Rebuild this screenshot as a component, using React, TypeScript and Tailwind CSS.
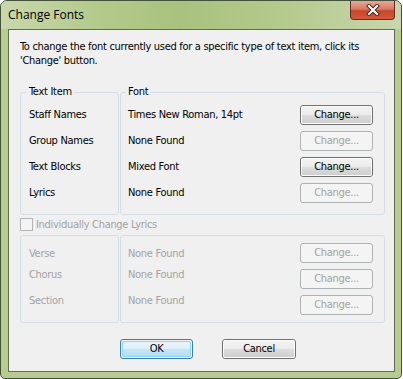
import { ReactNode } from 'react';

const font = "font-['DejaVu_Sans_Condensed','Liberation_Sans',sans-serif] tracking-[-0.3px]";

function WinButton({ children, disabled, primary, className = '' }: { children: ReactNode; disabled?: boolean; primary?: boolean; className?: string }) {
  if (disabled) {
    return (
      <div className={`h-[20px] rounded-[3px] border border-[#adb2b5] bg-[#f4f4f4] flex items-center justify-center text-[#a3a3a3] ${className}`}>
        {children}
      </div>
    );
  }
  if (primary) {
    return (
      <div className={`h-[20px] rounded-[3px] border border-[#3c7fb1] p-px ${className}`}>
        <div className="h-full rounded-[2px] border border-[#8fd6f7] bg-[linear-gradient(#e8f5fc_0%,#dcf0fa_50%,#c5e6f6_50%,#b8def2_100%)] flex items-center justify-center text-black">
          {children}
        </div>
      </div>
    );
  }
  return (
    <div className={`h-[20px] rounded-[3px] border border-[#707070] ${className}`}>
      <div className="h-full rounded-[2px] border border-[#fcfcfc] bg-[linear-gradient(#f2f2f2_0%,#ebebeb_50%,#dddddd_50%,#cfcfcf_100%)] flex items-center justify-center text-black">
        {children}
      </div>
    </div>
  );
}

export default function App() {
  const rows = [
    { item: 'Staff Names', font: 'Times New Roman, 14pt', enabled: true },
    { item: 'Group Names', font: 'None Found', enabled: false },
    { item: 'Text Blocks', font: 'Mixed Font', enabled: true },
    { item: 'Lyrics', font: 'None Found', enabled: false },
  ];
  const lyricRows = [
    { item: 'Verse', mt: 'mt-[11px]' },
    { item: 'Chorus', mt: 'mt-[7px]' },
    { item: 'Section', mt: 'mt-[12px]' },
  ];

  return (
    <div className="w-[403px] h-[379px] bg-white">
      <div className="w-[402px] h-[379px] rounded-t-[7px] rounded-b-[5px] border border-[#45523b] bg-[#b8cc92] flex flex-col">
        {/* title bar */}
        <div className="h-[28px] shrink-0 flex items-start justify-between rounded-t-[6px] bg-[linear-gradient(90deg,#c9d8ad_0%,#b3c98a_25%,#a9c27e_45%,#b4c98c_70%,#c8d6ad_100%)]">
          <span className="ml-[7px] mt-[6px] text-[12px] leading-[16px] text-black font-['Open_Sans',sans-serif]">Change Fonts</span>
          <div className="mr-[6px] w-[45px] h-[19px] rounded-b-[4px] border border-t-0 border-[#6b2b1f] bg-[linear-gradient(#e8a797_0%,#d77a63_45%,#c8442a_55%,#d45a3e_100%)] flex items-center justify-center">
            <svg width="14" height="12" viewBox="0 0 14 12">
              <path d="M3 2 L11 10 M11 2 L3 10" stroke="#4a1d14" strokeWidth="4" strokeLinecap="square" />
              <path d="M3 2 L11 10 M11 2 L3 10" stroke="#ffffff" strokeWidth="2.2" strokeLinecap="square" />
            </svg>
          </div>
        </div>

        {/* client area */}
        <div className={`ml-[7px] w-[387px] h-[343px] border border-[#5f6f52] bg-[#f0f0f0] text-[11px] leading-[14px] text-black ${font}`}>
          <p className="ml-[11px] mt-[10px]">
            To change the font currently used for a specific type of text item, click its
            <br />
            'Change' button.
          </p>

          <div className="ml-[11px] mt-[17px] flex gap-[1px]">
            <fieldset className="w-[99px] border border-[#d5dfe5] rounded-[3px] pb-[8px]">
              <legend className="ml-[6px] px-[2px]">Text Item</legend>
              <div className="mt-[3px] flex flex-col">
                {rows.map(r => (
                  <div key={r.item} className="h-[26px] pl-[8px] flex items-center">{r.item}</div>
                ))}
              </div>
            </fieldset>
            <fieldset className="w-[265px] border border-[#d5dfe5] rounded-[3px] pb-[8px]">
              <legend className="ml-[5px] px-[2px]">Font</legend>
              <div className="mt-[3px] flex flex-col">
                {rows.map(r => (
                  <div key={r.item} className="h-[26px] pl-[7px] pr-[11px] flex items-center justify-between">
                    <span>{r.font}</span>
                    <WinButton disabled={!r.enabled} className="w-[73px]">Change...</WinButton>
                  </div>
                ))}
              </div>
            </fieldset>
          </div>

          <label className="ml-[11px] mt-[3px] h-[13px] flex items-center gap-[3px] text-[#a3a3a3]">
            <span className="w-[13px] h-[13px] border border-[#b4b4b4] bg-[#f4f4f4]" />
            Individually Change Lyrics
          </label>

          <div className="ml-[11px] mt-[4px] flex gap-[1px] text-[#a3a3a3]">
            <div className="w-[99px] h-[88px] border border-[#d5dfe5] rounded-[3px] pl-[8px] flex flex-col">
              {lyricRows.map(r => (
                <div key={r.item} className={`h-[14px] ${r.mt}`}>{r.item}</div>
              ))}
            </div>
            <div className="w-[265px] h-[88px] border border-[#d5dfe5] rounded-[3px] pl-[7px] pr-[11px] flex justify-between">
              <div className="flex flex-col">
                {lyricRows.map(r => (
                  <div key={r.item} className={`h-[14px] ${r.mt}`}>None Found</div>
                ))}
              </div>
              <div className="pt-[7px] flex flex-col gap-[6px]">
                {lyricRows.map(r => (
                  <WinButton key={r.item} disabled className="w-[73px]">Change...</WinButton>
                ))}
              </div>
            </div>
          </div>

          <div className="mt-[16px] ml-[111px] flex gap-[29px]">
            <WinButton primary className="w-[73px]">OK</WinButton>
            <WinButton className="w-[74px]">Cancel</WinButton>
          </div>
        </div>
      </div>
    </div>
  );
}
